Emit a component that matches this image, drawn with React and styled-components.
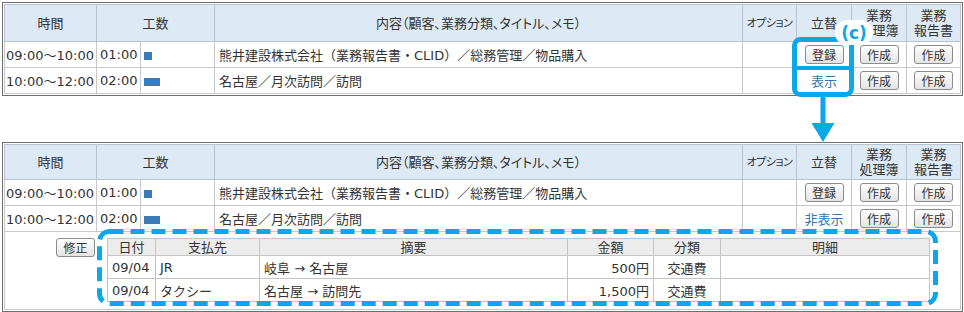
import React from 'react';
import styled, { createGlobalStyle } from 'styled-components';

const GlobalStyle = createGlobalStyle`
  body {
    margin: 0;
    background: #ffffff;
    font-family: "DejaVu Sans", "Noto Sans CJK JP", sans-serif;
    font-size: 13px;
    color: #333333;
  }
`;

const ACCENT = '#0ba7e8';

const Page = styled.div`
  position: relative;
  width: 964px;
  height: 312px;
  overflow: hidden;
  padding: 2px 0 0 2px;
  box-sizing: border-box;
`;

const Frame = styled.div`
  width: fit-content;
  border: 1px solid #6e6e6e;
  padding: 1px;
  margin-top: ${props => props.$top || 0}px;
  background: #fff;
`;

const Table = styled.table`
  border-collapse: collapse;
  table-layout: fixed;
  width: ${props => props.$w}px;
`;

const Col = styled.col`
  width: ${props => props.$w}px;
`;

const HeadCell = styled.th`
  height: ${props => props.$h || 35}px;
  padding: 0;
  background: #dde9f5;
  border: 1px solid #b9c4cf;
  font-weight: normal;
  font-size: ${props => props.$size || 13}px;
  line-height: 15px;
  font-feature-settings: "palt";
  letter-spacing: ${props => props.$tight ? '-0.5px' : '0'};
  color: #333;
  white-space: nowrap;
`;

const Cell = styled.td`
  height: 25px;
  padding: 0 ${props => props.$pad ?? 3}px;
  border: 1px solid #c8c8c8;
  text-align: ${props => props.$align || 'left'};
  white-space: nowrap;
  overflow: hidden;
`;

const Bar = styled.span`
  display: inline-block;
  height: 8px;
  background: #3d7bb8;
  vertical-align: middle;
`;

const Btn = styled.button`
  width: 39px;
  height: 19px;
  padding: 0;
  border: 1px solid #8c8c8c;
  border-radius: 3px;
  background: linear-gradient(#fefefe, #e4e4e4);
  font-family: "Noto Sans CJK JP", sans-serif;
  font-size: 12px;
  line-height: 16px;
  color: #333;
  vertical-align: middle;
`;

const LinkText = styled.span`
  color: #2f74b3;
  font-family: "Noto Sans CJK JP", sans-serif;
`;

const DetailCell = styled.td`
  padding: 6px 0 7px 0;
  border: 1px solid #c8c8c8;
`;

const DetailInner = styled.div`
  display: flex;
  align-items: flex-start;
  gap: 12px;
  padding-left: 51px;
`;

const SubTable = styled.table`
  border-collapse: collapse;
  table-layout: fixed;
  width: 822px;
`;

const SubHead = styled.th`
  height: 16px;
  padding: 0;
  background: #ececec;
  border: 1px solid #c4c4c4;
  font-weight: normal;
  font-size: 13px;
  line-height: 15px;
  color: #333;
`;

const SubCell = styled.td`
  height: 22px;
  padding: 0 4px;
  border: 1px solid #c4c4c4;
  text-align: ${props => props.$align || 'left'};
  white-space: nowrap;
`;

const Overlay = styled.svg`
  position: absolute;
  left: 0;
  top: 0;
  pointer-events: none;
`;

const BadgeText = styled.text`
  font-family: "DejaVu Sans", sans-serif;
  font-size: 17px;
  font-weight: bold;
  fill: ${ACCENT};
`;

const COLS = [92, 44, 74, 528, 54, 55, 55, 54];

const ROWS = [
  { time: '09:00～10:00', hours: '01:00', bar: 1, content: '熊井建設株式会社（業務報告書・CLID）／総務管理／物品購入', receipt: true },
  { time: '10:00～12:00', hours: '02:00', bar: 2, content: '名古屋／月次訪問／訪問', receipt: false },
];

const EXPENSES = [
  { date: '09/04', payee: 'JR', memo: '岐阜 → 名古屋', amount: '500円', kind: '交通費' },
  { date: '09/04', payee: 'タクシー', memo: '名古屋 → 訪問先', amount: '1,500円', kind: '交通費' },
];

function Header({ h }) {
  return (
    <tr>
      <HeadCell $h={h}>時間</HeadCell>
      <HeadCell $h={h} colSpan={2}>工数</HeadCell>
      <HeadCell $h={h}>内容（顧客、業務分類、タイトル、メモ）</HeadCell>
      <HeadCell $h={h} $size={11} $tight>オプション</HeadCell>
      <HeadCell $h={h}>立替</HeadCell>
      <HeadCell $h={h}>業務<br />処理簿</HeadCell>
      <HeadCell $h={h}>業務<br />報告書</HeadCell>
    </tr>
  );
}

function WorkTable({ top, h, expanded }) {
  return (
    <Frame $top={top}>
      <Table $w={956}>
        <colgroup>
          {COLS.map((w, i) => <Col key={i} $w={w} />)}
        </colgroup>
        <tbody>
          <Header h={h} />
          {ROWS.map((r, i) => (
            <tr key={i}>
              <Cell $pad={1}>{r.time}</Cell>
              <Cell>{r.hours}</Cell>
              <Cell><Bar style={{ width: r.bar * 8 }} /></Cell>
              <Cell $pad={4}>{r.content}</Cell>
              <Cell />
              <Cell $align="center" $pad={0}>
                {r.receipt ? <Btn>登録</Btn> : <LinkText>{expanded ? '非表示' : '表示'}</LinkText>}
              </Cell>
              <Cell $align="center" $pad={0}><Btn>作成</Btn></Cell>
              <Cell $align="center" $pad={0}><Btn>作成</Btn></Cell>
            </tr>
          ))}
          {expanded && (
            <tr>
              <DetailCell colSpan={8}>
                <DetailInner>
                  <Btn>修正</Btn>
                  <SubTable>
                    <colgroup>
                      {[48, 104, 308, 86, 67, 209].map((w, i) => <Col key={i} $w={w} />)}
                    </colgroup>
                    <tbody>
                      <tr>
                        <SubHead>日付</SubHead>
                        <SubHead>支払先</SubHead>
                        <SubHead>摘要</SubHead>
                        <SubHead>金額</SubHead>
                        <SubHead>分類</SubHead>
                        <SubHead>明細</SubHead>
                      </tr>
                      {EXPENSES.map((e, i) => (
                        <tr key={i}>
                          <SubCell>{e.date}</SubCell>
                          <SubCell>{e.payee}</SubCell>
                          <SubCell>{e.memo}</SubCell>
                          <SubCell $align="right">{e.amount}</SubCell>
                          <SubCell $align="center">{e.kind}</SubCell>
                          <SubCell />
                        </tr>
                      ))}
                    </tbody>
                  </SubTable>
                </DetailInner>
              </DetailCell>
            </tr>
          )}
        </tbody>
      </Table>
    </Frame>
  );
}

function Annotations() {
  return (
    <Overlay width="964" height="312" viewBox="0 0 964 312">
      <rect x="794.5" y="39.5" width="57" height="55" rx="6" fill="none" stroke={ACCENT} strokeWidth="5" />
      <line x1="794" y1="68" x2="852" y2="68" stroke={ACCENT} strokeWidth="4" />
      <rect x="835" y="20" width="38" height="25" rx="12" fill="#ffffff" />
      <BadgeText x="854" y="39" textAnchor="middle">(c)</BadgeText>
      <line x1="823" y1="96" x2="823" y2="125" stroke={ACCENT} strokeWidth="5" />
      <polygon points="811.5,123 834.5,123 823,142" fill={ACCENT} />
      <rect x="99.5" y="231.5" width="836" height="72" rx="10" fill="none"
        stroke={ACCENT} strokeWidth="5" strokeDasharray="14 7" />
    </Overlay>
  );
}

export default function App() {
  return (
    <Page>
      <GlobalStyle />
      <WorkTable h={36} />
      <WorkTable top={46} h={34} expanded />
      <Annotations />
    </Page>
  );
}
